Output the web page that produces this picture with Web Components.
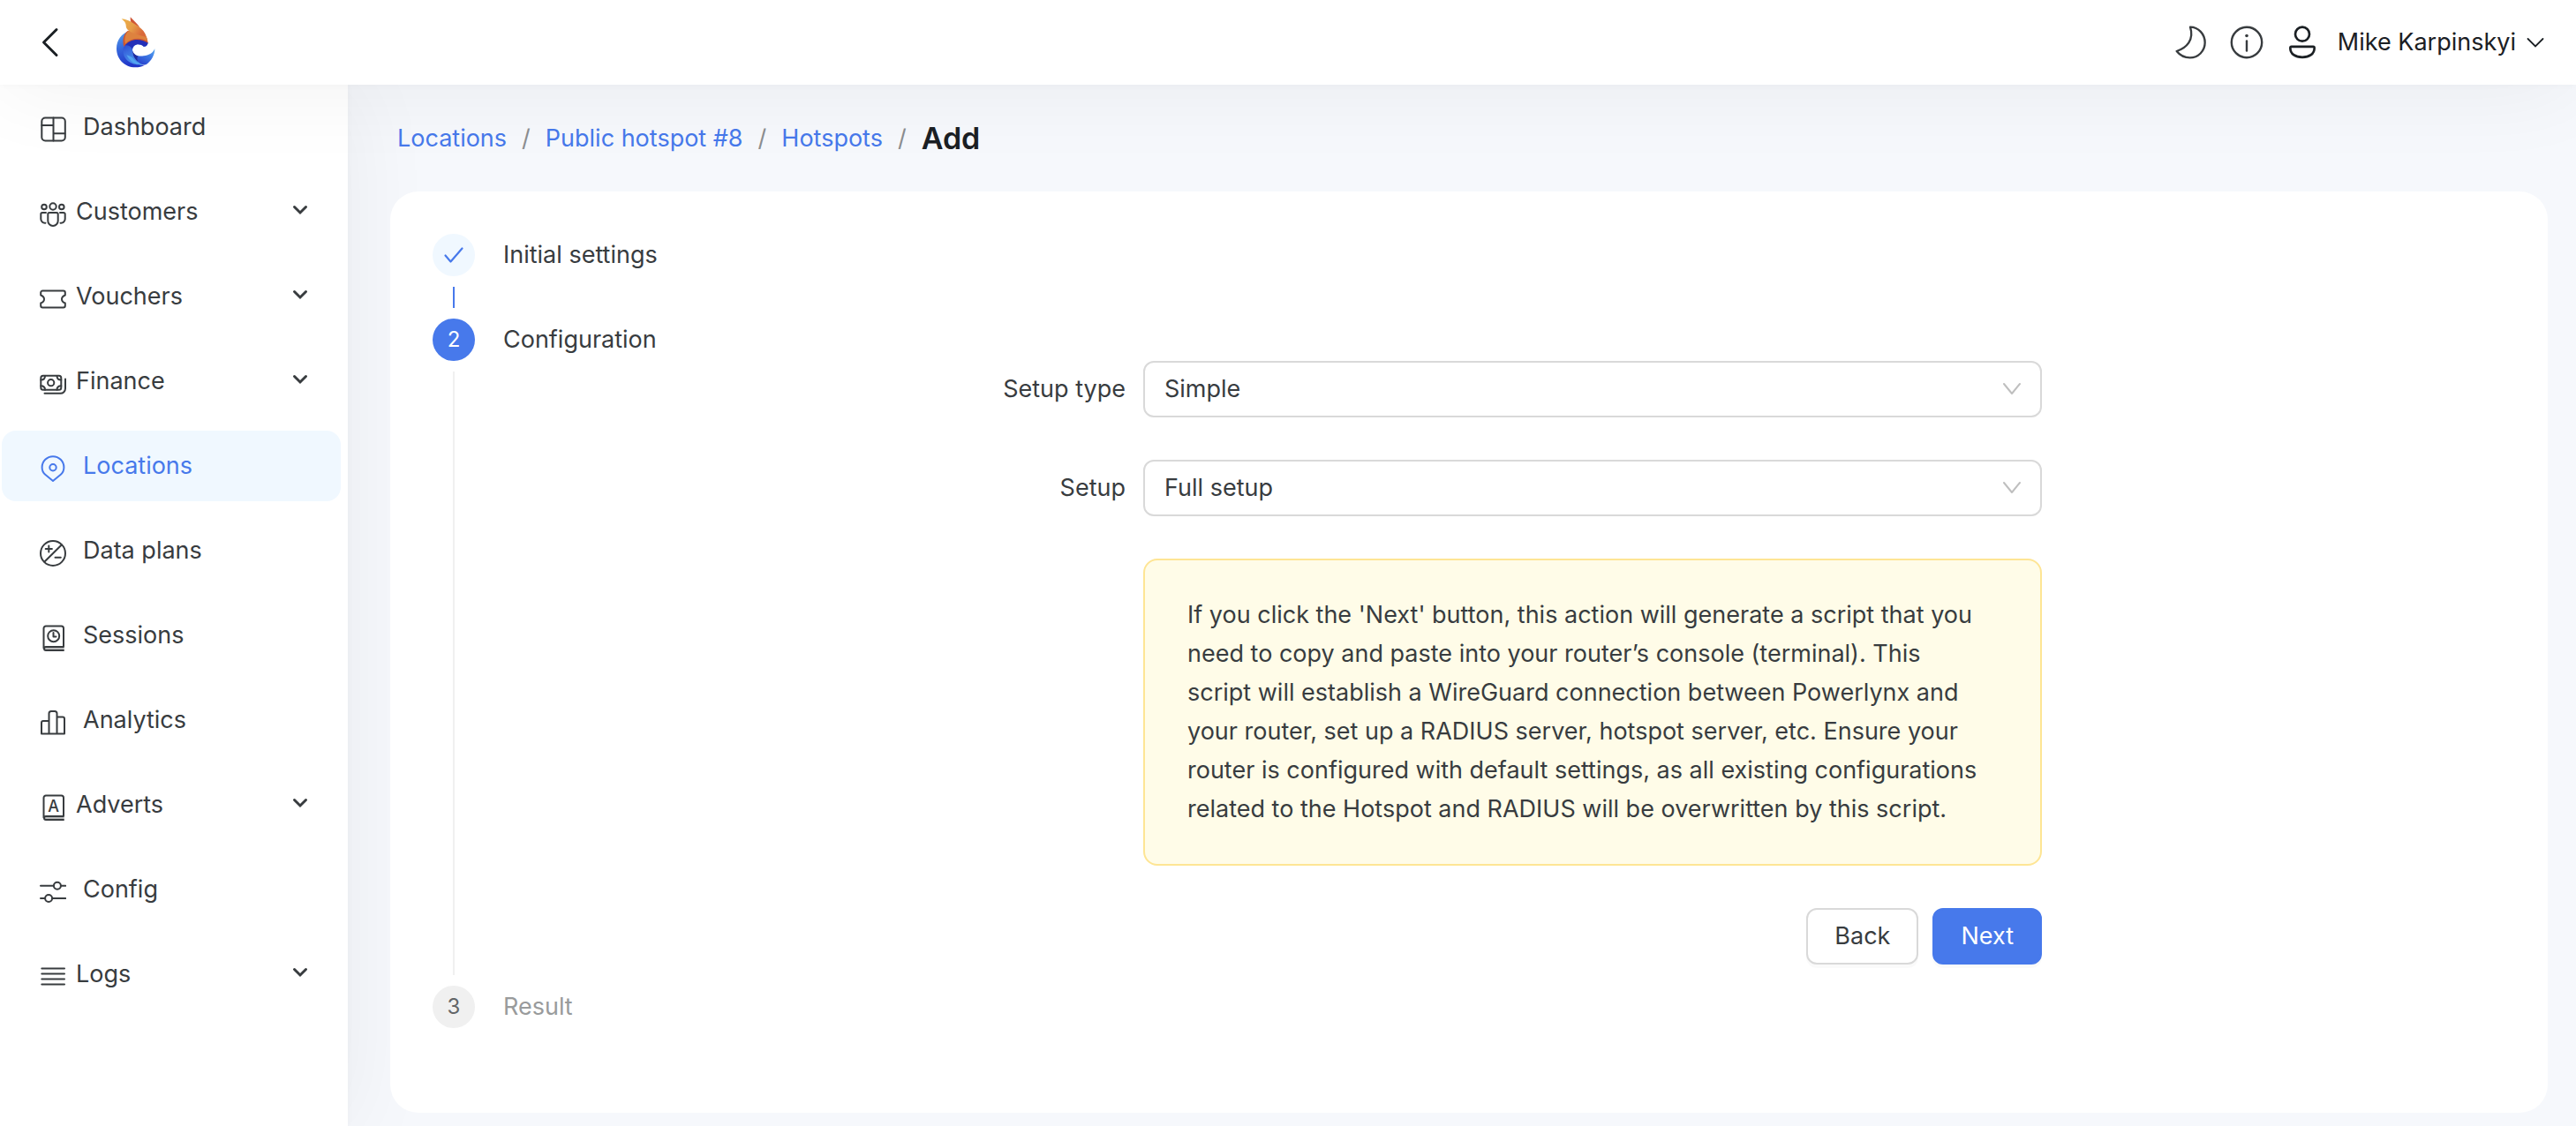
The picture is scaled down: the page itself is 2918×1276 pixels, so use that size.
<!DOCTYPE html>
<html lang="en">
<head>
<meta charset="utf-8">
<title>Add hotspot</title>
<style>
  html { --ink: #383c3f; --ink-strong: #1b2024; --blue: #4779eb; --line: #d9d9d9; }
  body {
    margin: 0; background: #f6f8fc; color: var(--ink);
    font: 27px/44px Inter, "Liberation Sans", sans-serif;
  }
</style>
</head>
<body>
<app-shell>
  <app-header slot="header" user="Mike Karpinskyi"></app-header>
  <side-nav slot="nav">
    <nav-item icon="dashboard">Dashboard</nav-item>
    <nav-item icon="customers" submenu>Customers</nav-item>
    <nav-item icon="vouchers" submenu>Vouchers</nav-item>
    <nav-item icon="finance" submenu>Finance</nav-item>
    <nav-item icon="locations" active>Locations</nav-item>
    <nav-item icon="plans">Data plans</nav-item>
    <nav-item icon="sessions">Sessions</nav-item>
    <nav-item icon="analytics">Analytics</nav-item>
    <nav-item icon="adverts" submenu>Adverts</nav-item>
    <nav-item icon="config">Config</nav-item>
    <nav-item icon="logs" submenu>Logs</nav-item>
  </side-nav>
  <bread-crumbs>
    <crumb-link>Locations</crumb-link>
    <crumb-link>Public hotspot #8</crumb-link>
    <crumb-link>Hotspots</crumb-link>
    <crumb-link current>Add</crumb-link>
  </bread-crumbs>
  <content-card>
    <wizard-step state="done" label="Initial settings"></wizard-step>
    <wizard-step state="current" number="2" label="Configuration">
      <setup-form>
        <select-field label="Setup type" value="Simple"></select-field>
        <select-field label="Setup" value="Full setup"></select-field>
        <note-box>If you click the 'Next' button, this action will generate a script that you need to copy and paste into your router’s console (terminal). This script will establish a WireGuard connection between Powerlynx and your router, set up a RADIUS server, hotspot server, etc. Ensure your router is configured with default settings, as all existing configurations related to the Hotspot and RADIUS will be overwritten by this script.</note-box>
        <action-button slot="actions">Back</action-button>
        <action-button slot="actions" primary>Next</action-button>
      </setup-form>
    </wizard-step>
    <wizard-step state="wait" number="3" label="Result"></wizard-step>
  </content-card>
</app-shell>

<script>
const define = (name, render) => customElements.define(name, class extends HTMLElement {
  constructor() {
    super();
    this.attachShadow({ mode: 'open' });
  }
  connectedCallback() {
    this.shadowRoot.innerHTML = '<style>*{box-sizing:border-box}svg{display:block;flex:none}</style>' + render(this);
  }
});

const book = '<path d="M4.5 26.5V4A2.5 2.5 0 0 1 7 1.5h17.5A2.5 2.5 0 0 1 27 4v21M27 25H7a2 2 0 0 0 0 4h20"/><path d="M6 27h21" stroke-opacity=".35"/>';
const ICONS = {
  dashboard: '<rect x="2.3" y="1.5" width="26.5" height="26" rx="4"/><path d="M15.5 1.5v26M2.3 10h13.2M15.5 19.3h13"/>',
  customers: '<circle cx="5" cy="6.5" r="2.8"/><circle cx="15" cy="6" r="3.7"/><circle cx="24.8" cy="6.5" r="2.8"/><path d="M11 13h8a1.7 1.7 0 0 1 1.7 1.7v7.5a5.7 5.7 0 0 1-11.4 0v-7.5A1.7 1.7 0 0 1 11 13z"/><path d="M7 13H3a1.7 1.7 0 0 0-1.7 1.7V20c0 3 2.2 5 5.2 4.7M23 13h4a1.7 1.7 0 0 1 1.7 1.7V20c0 3-2.2 5-5.2 4.7"/>',
  vouchers: '<path d="M1.2 10.5v-3a2 2 0 0 1 2-2h23.6a2 2 0 0 1 2 2v3c-2.3.8-3.8 2.3-3.8 4.5s1.5 3.7 3.8 4.5v3a2 2 0 0 1-2 2H3.2a2 2 0 0 1-2-2v-3c2.3-.8 3.8-2.3 3.8-4.5s-1.5-3.7-3.8-4.5z"/>',
  finance: '<rect x="1.3" y="5.8" width="23" height="16" rx="2.5"/><circle cx="12.7" cy="13.7" r="3.6"/><path d="M6 6c0 3-2 4.5-4.7 4.5M19.5 6c0 3 2 4.5 4.8 4.5M6 21.7c0-3-2-4.5-4.7-4.5M19.5 21.7c0-3 2-4.5 4.8-4.5M5.5 25.8h18a5.5 5.5 0 0 0 5.5-5.5V9.5"/>',
  locations: '<path d="M15 29 6.2 21.8C3.6 19.7 2.6 17 2.6 13.6a12.4 12.4 0 0 1 24.8 0c0 3.4-1 6.1-3.6 8.2z"/><circle cx="15" cy="13.7" r="3.7"/>',
  plans: '<circle cx="15" cy="15" r="14"/><path d="M5.5 24.5 24.7 5.5M10.3 6.5v7M6.7 10h7.2M17.5 19.7h6.3"/>',
  sessions: book + '<circle cx="15.7" cy="12.7" r="6.5"/><path d="M15.5 9v4.5h3"/>',
  analytics: '<path d="M10.5 27.5H2V15a2 2 0 0 1 2-2h6.5M10.5 27.5v-23A2.5 2.5 0 0 1 13 2h4a2.5 2.5 0 0 1 2.5 2.5v23zM19.5 8.5H26a2 2 0 0 1 2 2v17h-8.5"/>',
  adverts: book + '<text x="15.7" y="20" text-anchor="middle" font-size="18" font-weight="500" stroke="none" fill="currentColor">A</text>',
  config: '<path d="M1 7.7h14.7M24 7.7h5.2M1 22h5M14.2 22h15"/><circle cx="19.9" cy="7.7" r="4"/><circle cx="10.1" cy="22" r="4"/>',
  logs: '<path d="M2.3 5.5H28M2.3 11.5H28M2.3 17.5H28M2.3 23.5H28"/>'
};

define('app-shell', () => `
  <style>
    :host { display: grid; grid-template: auto 1fr / 394px minmax(0, 1fr); min-height: 100vh; }
    header { grid-column: 1 / -1; position: relative; z-index: 3; }
    nav { display: grid; position: relative; z-index: 1; }
    main { position: relative; z-index: 2; display: flex; flex-direction: column; gap: 32px; padding: 33px 32px 15px 48px; }
  </style>
  <header><slot name="header"></slot></header>
  <nav aria-label="Main"><slot name="nav"></slot></nav>
  <main><slot></slot></main>`);

define('app-header', el => `
  <style>
    :host { display: flex; align-items: center; height: 96px; padding: 0 36px 0 44px; background: #fff;
      color: var(--ink-strong); box-shadow: 0 4px 100px rgba(0,0,0,.06), 0 0 8px rgba(0,0,0,.03); }
    button { display: flex; align-items: center; padding: 0; border: 0; background: none; font: inherit; color: inherit; }
    .tools { display: flex; align-items: center; gap: 26px; margin-left: auto; color: var(--ink); }
    .logo { margin-left: 62px; }
    .user { gap: 24px; color: var(--ink-strong); margin-left: 2px; }
    .name { display: flex; align-items: center; gap: 12px; }
  </style>
  <button aria-label="Back"><svg width="24" height="40" viewBox="0 0 24 40" fill="none" stroke="currentColor" stroke-width="3" stroke-linecap="round" stroke-linejoin="round"><path d="M20 5.5 5.5 20 20 34.5"/></svg></button>
  <a class="logo" href="#" aria-label="Home">
    <svg width="48" height="62" viewBox="390 50 144 186">
      <defs>
        <linearGradient id="b1" x1="0" y1="0" x2="0.3" y2="1"><stop offset="0" stop-color="#5ba8ee"/><stop offset=".5" stop-color="#3566dc"/><stop offset="1" stop-color="#2136c8"/></linearGradient>
        <linearGradient id="b2" x1="0" y1="0" x2="0.5" y2="1"><stop offset="0" stop-color="#2534c6"/><stop offset=".5" stop-color="#3b6fe0"/><stop offset="1" stop-color="#4d97ee"/></linearGradient>
        <linearGradient id="b3" x1="1" y1="0" x2="0.2" y2="1"><stop offset="0" stop-color="#58aaf2"/><stop offset=".45" stop-color="#3c74e2"/><stop offset="1" stop-color="#2337c9"/></linearGradient>
        <linearGradient id="o1" x1="0" y1="0" x2="1" y2="0.5"><stop offset="0" stop-color="#efb349"/><stop offset=".55" stop-color="#e59c48"/><stop offset="1" stop-color="#d9693a"/></linearGradient>
      </defs>
      <path fill="url(#b1)" d="M440 104C413 112 396 136 396 164c0 36 28 64 64 64 12 0 22-2 32-8-24 0-48-10-62-34-12-22-10-52 10-82z"/>
      <path fill="url(#b2)" d="M421 156c8-18 26-26 46-24 16 0 30 4 36 13-2 8-8 14-15 12-16-14-38-6-38 14 0 22 20 38 40 44-30 14-84-10-69-59z"/>
      <path fill="#2430b8" d="M422 154c8-16 26-24 45-22 16 0 30 4 36 13-2 8-8 14-15 12-16-14-38-6-38 10-6-14-20-16-28-13z"/>
      <path fill="url(#b3)" d="M450 170c2 16 20 22 38 19 18-2 30-8 38-24 0 22-12 42-30 54-22 4-44-26-46-49z"/>
      <path fill="#202c9e" d="M450 170c2 10 10 17 20 20-6 4-4 12 0 20-12-10-20-24-20-40z"/>
      <path fill="#53a5f0" d="M430 186c10 22 32 34 58 34 -10-2-24-8-32-18-8-10-14-12-26-16z"/>
      <path fill="#cf5636" d="M443 57c12 12 22 22 32 34l-28-12c-4-8-4-14-4-22z"/>
      <path fill="#cd5530" d="M421 158c-6-22-2-44 14-55l54 8c8 8 12 20 14 34-24-16-62-18-82 13z"/>
      <path fill="#dd823f" d="M426 148c-5-18 0-36 12-45l51 8c7 7 11 16 12 28-24-14-56-12-75 9z"/>
      <path fill="url(#o1)" d="M413 63c12 0 34 10 48 20 14 8 26 18 32 30 2 6 2 9 1 11-22-6-44-10-60-24-8-8-4-14-8-22-2-6-8-10-13-15z"/>
    </svg>
  </a>
  <div class="tools">
    <button aria-label="Dark mode"><svg width="36" height="40" viewBox="128 84 108 120" fill="none" stroke="currentColor" stroke-width="7" stroke-linejoin="round"><path d="M179 92c28 0 50 24 50 53 0 29-23 51-51 51-18 0-34-8-45-22 34-12 60-38 46-82z"/></svg></button>
    <button aria-label="Information"><svg width="38" height="38" viewBox="0 0 38 38" fill="none" stroke="currentColor" stroke-width="2.4" stroke-linecap="round"><circle cx="19" cy="19" r="17.2"/><path d="M19 17.5v11"/><circle cx="19" cy="11.5" r="1.8" fill="currentColor" stroke="none"/></svg></button>
    <button class="user"><svg width="32" height="40" viewBox="516 84 96 120" fill="none" stroke="currentColor" stroke-width="8"><circle cx="564" cy="116" r="24"/><path d="M527 158.500h74c3 0 4 2 4 5 0 20-17 31-41 31s-41-11-41-31c0-3 1-5 4-5z"/></svg>
      <span class="name">${el.getAttribute('user')}<svg width="20" height="16" viewBox="0 0 20 16" fill="none" stroke="currentColor" stroke-width="1.8" stroke-linecap="round"><path d="M1.5 4 10 12.5 18.5 4"/></svg></span></button>
  </div>`);

define('side-nav', () => `
  <style>
    :host { display: flex; flex-direction: column; gap: 16px; padding: 8px 8px 16px 2px; background: #fff;
      box-shadow: 0 4px 100px rgba(0,0,0,.06), 0 0 8px rgba(0,0,0,.03); }
  </style><slot></slot>`);

define('nav-item', el => {
  const sub = el.hasAttribute('submenu');
  const tag = sub ? 'button' : 'a';
  const attrs = sub ? 'aria-expanded="false"' : 'href="#"' + (el.hasAttribute('active') ? ' aria-current="page"' : '');
  return `
  <style>
    :host { display: block; }
    a, button { display: flex; align-items: center; gap: 19px; width: 100%; height: 80px; padding: 0 36px 0 43px;
      border: 0; border-radius: 16px; background: none; color: var(--ink); font: inherit; text-align: left; text-decoration: none; }
    button { gap: 11px; }
    a[aria-current] { background: #f0f8ff; color: var(--blue); }
    span { flex: 1; }
  </style>
  <${tag} ${attrs}>
    <svg width="30" height="36" viewBox="0 -6 30 36" fill="none" stroke="currentColor" stroke-width="2" stroke-linecap="round" stroke-linejoin="round">${ICONS[el.getAttribute('icon')]}</svg>
    <span><slot></slot></span>
    ${sub ? '<svg width="20" height="20" viewBox="0 0 20 20" fill="none" stroke="currentColor" stroke-width="3" stroke-linecap="round"><path d="M3.5 4.5 10 11l6.5-6.5"/></svg>' : ''}
  </${tag}>`;
});

define('bread-crumbs', () => `
  <style>:host { display: flex; align-items: center; height: 56px; padding-left: 8px; }</style><slot></slot>`);

define('crumb-link', el => el.hasAttribute('current') ? `
  <style>:host { color: var(--ink-strong); } strong { font-size: 34px; font-weight: 600; line-height: 56px; }</style>
  <strong aria-current="page"><slot></slot></strong>` : `
  <style>a { color: var(--blue); text-decoration: none; } span { margin: 0 17px; color: #8c8e90; }</style>
  <a href="#"><slot></slot></a><span>/</span>`);

define('content-card', () => `
  <style>:host { display: flex; flex-direction: column; padding: 48px 48px 96px; border-radius: 32px; background: #fff; }</style><slot></slot>`);

define('wizard-step', el => {
  const state = el.getAttribute('state');
  return `
  <style>
    :host { display: grid; grid-template-columns: 48px minmax(0, 1fr); column-gap: 32px; }
    .rail { display: flex; flex-direction: column; align-items: center; }
    .dot { display: flex; align-items: center; justify-content: center; width: 48px; height: 48px; border-radius: 50%; font-size: 24px; }
    .done { background: #f0f8ff; color: var(--blue); }
    .current { background: var(--blue); color: #fff; }
    .wait { background: #f0f0f0; color: #626567; }
    .tail { flex: 1; width: 2px; min-height: 24px; margin: 12px 0; background: #f0f0f0; }
    .done + .tail { background: var(--blue); }
    .title { line-height: 48px; }
    .wait-title { color: #999b9c; }
    .body { padding-bottom: 24px; }
  </style>
  <div class="rail">
    <div class="dot ${state}">${state === 'done'
      ? '<svg width="24" height="24" viewBox="0 0 24 24" fill="none" stroke="currentColor" stroke-width="2.2" stroke-linecap="round" stroke-linejoin="round"><path d="M2.5 12.5 8.5 19.5 21.5 4.5"/></svg>'
      : el.getAttribute('number')}</div>
    ${state === 'wait' ? '' : '<div class="tail"></div>'}
  </div>
  <div>
    <div class="title ${state}-title">${el.getAttribute('label')}</div>
    ${state === 'current' ? '<div class="body"><slot></slot></div>' : ''}
  </div>`;
});

define('setup-form', () => `
  <style>
    :host { display: block; }
    form { display: flex; flex-direction: column; gap: 48px; }
    .actions { display: grid; grid-template-columns: 725fr 1018fr 525fr; }
    .actions div { grid-column: 2; display: flex; justify-content: flex-end; gap: 16px; }
  </style>
  <form><slot></slot><div class="actions"><div><slot name="actions"></slot></div></div></form>`);

define('select-field', el => `
  <style>
    :host { display: grid; grid-template-columns: 725fr 1018fr 525fr; align-items: center; }
    label { padding-right: 20px; text-align: right; }
    .box { display: grid; align-items: center; }
    select, svg { grid-area: 1 / 1; }
    select { appearance: none; width: 100%; height: 64px; padding: 0 56px 0 22px; border: 2px solid var(--line);
      border-radius: 12px; background: #fff; color: var(--ink); font: inherit; }
    svg { justify-self: end; margin-right: 23px; pointer-events: none; z-index: 1; }
  </style>
  <label for="field">${el.getAttribute('label')}</label>
  <div class="box"><select id="field"><option>${el.getAttribute('value')}</option></select>
    <svg width="22" height="16" viewBox="0 0 22 16" fill="none" stroke="#bfbfbf" stroke-width="2" stroke-linecap="round" stroke-linejoin="round"><path d="M2 2 11 13 20 2"/></svg></div>`);

define('note-box', () => `
  <style>
    :host { display: grid; grid-template-columns: 725fr 1018fr 525fr; }
    p { grid-column: 2; margin: 0; padding: 40px 60px 40px 48px; border: 2px solid #fee594; border-radius: 16px; background: #fffce8; }
  </style>
  <p><slot></slot></p>`);

define('action-button', el => `
  <style>
    :host { display: block; }
    button { height: 64px; padding: 0 30px; border: 2px solid var(--line); border-radius: 12px; background: #fff;
      color: var(--ink); font: inherit; box-shadow: 0 4px 0 rgba(0,0,0,.02); }
    .primary { border-color: var(--blue); background: var(--blue); color: #fff; }
  </style>
  <button type="button" class="${el.hasAttribute('primary') ? 'primary' : ''}"><slot></slot></button>`);
</script>
</body>
</html>
